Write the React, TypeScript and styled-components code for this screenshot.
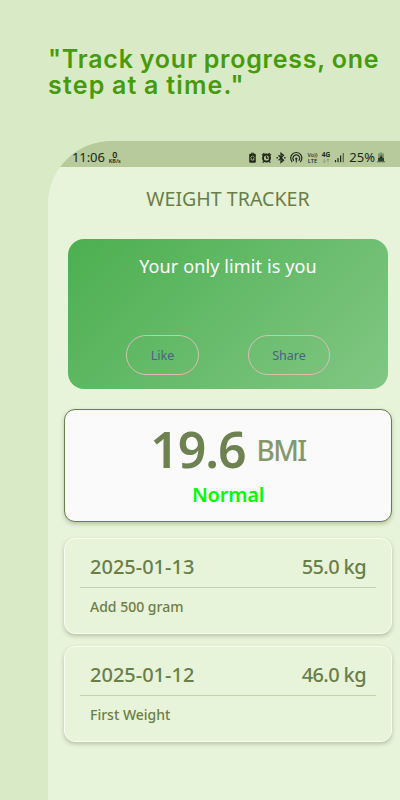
import React from 'react';
import styled, { createGlobalStyle } from 'styled-components';

const GlobalStyle = createGlobalStyle`
  * { box-sizing: border-box; }
  body { margin: 0; background: #d9eac7; }
`;

const Page = styled.main`
  width: 400px;
  height: 800px;
  overflow: hidden;
  display: flex;
  flex-direction: column;
  padding-left: 48px;
  background: #d9eac7;
  font-family: 'Noto Sans', sans-serif;
  color: #6a7e49;
`;

const Headline = styled.h1`
  margin: 0;
  height: 141px;
  padding-top: 46px;
  font: 600 25px/26px Inter, sans-serif;
  color: #479b09;
  white-space: nowrap;
`;

const HeadLine = styled.span<{ $gap: number }>`
  display: block;
  letter-spacing: ${(p) => p.$gap}px;
  word-spacing: -1px;
`;

const Phone = styled.section`
  flex: 1;
  width: 420px;
  overflow: hidden;
  border-top-left-radius: 63px;
  background: #e8f4da;
`;

const StatusBar = styled.header`
  height: 26px;
  width: 352px;
  padding: 7px 15px 0 24px;
  display: flex;
  justify-content: space-between;
  background: #b7ca9b;
  color: #20281b;
`;

const StatusGroup = styled.div`
  height: 19px;
  display: flex;
  align-items: center;
`;

const StatusText = styled.span<{ $gap: number }>`
  font-size: 13px;
  line-height: 19px;
  letter-spacing: ${(p) => p.$gap}px;
`;

const Rate = styled.span`
  display: flex;
  flex-direction: column;
  align-items: center;
  margin-left: 4px;
  font-size: 9px;
  font-weight: 600;
  line-height: 8px;
`;

const RateUnit = styled.span`
  font-size: 5.5px;
  line-height: 5px;
  font-weight: 600;
`;

const Content = styled.div`
  width: 360px;
  padding: 0 16px;
  display: flex;
  flex-direction: column;
`;

const Title = styled.h2`
  margin: 0;
  height: 72px;
  padding-top: 18px;
  font-size: 19.6px;
  font-weight: 400;
  line-height: 28px;
  letter-spacing: 0;
  text-align: center;
`;

const Quote = styled.section`
  height: 150px;
  margin: 0 4px 20px;
  padding-top: 14px;
  border-radius: 16px;
  background: linear-gradient(135deg, #4caf50, #81c784);
  text-align: center;
`;

const QuoteText = styled.p`
  margin: 0 0 56px;
  font-size: 18px;
  line-height: 26px;
  letter-spacing: 0.12px;
  color: #fff;
`;

const Actions = styled.div`
  display: flex;
  gap: 49px;
  padding-left: 58px;
`;

const Action = styled.button<{ $width: number }>`
  width: ${(p) => p.$width}px;
  height: 40px;
  padding: 0;
  border: 1px solid #d7bfb5;
  border-radius: 20px;
  background: transparent;
  color: #4b6284;
  font: 400 12.5px 'Noto Sans', sans-serif;
`;

const Card = styled.article`
  border-radius: 11px;
  box-shadow: 0 2px 4px rgba(60, 80, 40, 0.3);
`;

const BmiCard = styled(Card)`
  height: 113px;
  border: 1px solid #6a7e49;
  background: #fafafa;
  margin-bottom: 16px;
  text-align: center;
`;

const BmiRow = styled.div`
  height: 71px;
  padding-top: 6px;
  display: flex;
  justify-content: center;
  align-items: center;
`;

const BmiValue = styled.strong`
  font-size: 50px;
  line-height: 68px;
  font-weight: 600;
  letter-spacing: -1.1px;
  color: #6d8250;
`;

const BmiUnit = styled.span`
  margin: 3px 0 0 11px;
  font-size: 28px;
  font-weight: 500;
  letter-spacing: -1.6px;
  color: #85986a;
`;

const BmiState = styled.p`
  margin: 0;
  font-size: 20px;
  line-height: 28px;
  font-weight: 600;
  letter-spacing: -0.2px;
  color: #00fa00;
`;

const Entry = styled(Card)`
  height: 96px;
  margin-bottom: 12px;
  padding: 0 15px;
  border: 1px solid #f8fcf3;
  background: #e8f4da;
`;

const EntryRow = styled.div`
  height: 49px;
  padding: 6px 10px 0;
  display: flex;
  align-items: center;
  justify-content: space-between;
  border-bottom: 1px solid #c4d2b2;
  font-size: 20px;
  font-weight: 500;
`;

const Weight = styled.span`
  letter-spacing: -0.6px;
`;

const Note = styled.p`
  margin: 0;
  padding: 9px 10px;
  font-size: 14px;
  line-height: 20px;
  font-weight: 500;
`;

const Icons = styled.svg`
  display: block;
  flex: none;
  margin-right: 4px;
`;

const Battery = styled.svg`
  flex: none;
  margin-left: 2px;
`;

const StatusIcons = () => (
  <Icons width="97" height="15" viewBox="248 150 97 15" fill="none" stroke="#20281b">
    <rect x="249.2" y="153.7" width="6.6" height="9" rx="1" fill="#20281b" stroke="none" />
    <path d="M251 152.7h3v1h-3z" fill="#20281b" stroke="none" />
    <path d="M252.5 155.7l2 2.1M252.5 155.7l-2 2.1M251.2 158v2h2.6v-2" stroke="#b7ca9b" strokeWidth=".8" />
    <circle cx="266.5" cy="158" r="3.5" strokeWidth="1.9" />
    <path d="M262 155.2l2.4-2M271 155.2l-2.4-2M263.7 161.4l-1 1.3M269.3 161.4l1 1.3M266.5 155.8v2.4h2" strokeWidth="1.3" />
    <path d="M278.5 155.2l5 5-2.5 2.1v-9l2.5 2.1-5 5" strokeWidth="1.3" />
    <path d="M276.5 157.8h1.4M284.1 157.8h1.4" strokeWidth="1.5" />
    <path d="M292.3 162a5.6 5.6 0 1 1 8 0M293.9 160.7a3.4 3.4 0 1 1 4.8 0" strokeWidth="1.2" />
    <circle cx="296.3" cy="158.7" r="1.1" fill="#20281b" stroke="none" />
    <path d="M296.3 159v3.5" strokeWidth="1.1" />
    <g fill="#20281b" stroke="none" fontFamily="Noto Sans" fontWeight="500">
      <text x="307.5" y="157" fontSize="5.5" textLength="10" lengthAdjust="spacingAndGlyphs">Vo))</text>
      <text x="307.7" y="162.6" fontSize="6" textLength="9.5" lengthAdjust="spacingAndGlyphs">LTE</text>
      <text x="321.7" y="157.4" fontSize="6.6" fontWeight="700" textLength="8.5" lengthAdjust="spacingAndGlyphs">4G</text>
    </g>
    <path d="M324.2 158.8v3.6m-1.4-1.4l1.4 1.4 1.4-1.4M328 162.4v-3.6m-1.4 1.4l1.4-1.4 1.4 1.4" stroke="#879672" strokeWidth=".8" />
    <path d="M335.5 160v2.3M338 158v4.3" strokeWidth="1.2" />
    <path d="M340.6 155.6v6.7" strokeWidth="1.2" />
    <path d="M343.3 153v9.3" stroke="#56624a" strokeWidth="1.2" />
  </Icons>
);

const BatteryIcon = () => (
  <Battery width="8" height="11" viewBox="0 0 8 11">
    <path d="M2.6.5h2.8v1H7v5H1v-5h1.6z" fill="#84946f" />
    <path d="M1 6h6v3.2H1z" fill="#34402b" />
    <path d="M0 9.2h8v1H0z" fill="#4c593f" />
    <path d="M4.6 2.5L2.5 6h1.3v2l2-3.3H4.5z" fill="#20281b" />
  </Battery>
);

const entries = [
  { date: '2025-01-13', weight: '55.0 kg', note: 'Add 500 gram' },
  { date: '2025-01-12', weight: '46.0 kg', note: 'First Weight' },
];

export default function App() {
  return (
    <Page>
      <GlobalStyle />
      <Headline>
        <HeadLine $gap={0.78}>"Track your progress, one</HeadLine>
        <HeadLine $gap={1.2}>step at a time."</HeadLine>
      </Headline>
      <Phone>
        <StatusBar>
          <StatusGroup>
            <StatusText $gap={-0.1}>11:06</StatusText>
            <Rate>0<RateUnit>KB/s</RateUnit></Rate>
          </StatusGroup>
          <StatusGroup>
            <StatusIcons />
            <StatusText $gap={0}>25%</StatusText>
            <BatteryIcon />
          </StatusGroup>
        </StatusBar>
        <Content>
          <Title>WEIGHT TRACKER</Title>
          <Quote>
            <QuoteText>Your only limit is you</QuoteText>
            <Actions>
              <Action $width={73}>Like</Action>
              <Action $width={82}>Share</Action>
            </Actions>
          </Quote>
          <BmiCard>
            <BmiRow>
              <BmiValue>19.6</BmiValue>
              <BmiUnit>BMI</BmiUnit>
            </BmiRow>
            <BmiState>Normal</BmiState>
          </BmiCard>
          {entries.map((e) => (
            <Entry key={e.date}>
              <EntryRow>
                <span>{e.date}</span>
                <Weight>{e.weight}</Weight>
              </EntryRow>
              <Note>{e.note}</Note>
            </Entry>
          ))}
        </Content>
      </Phone>
    </Page>
  );
}
